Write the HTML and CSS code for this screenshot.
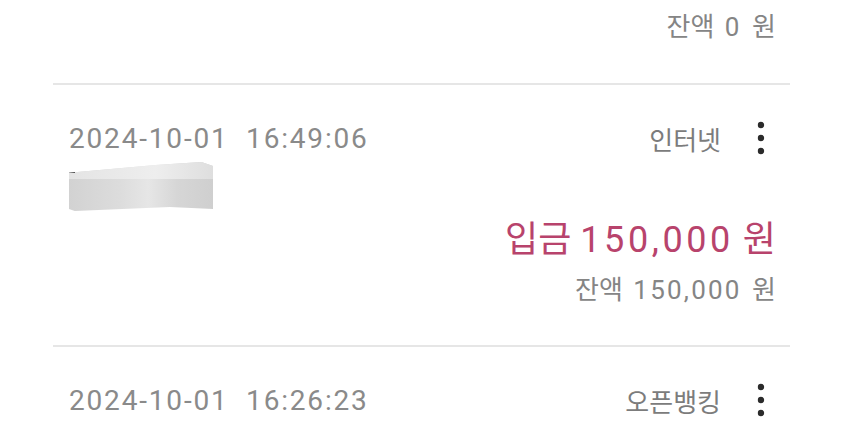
FILE: index.html
```html
<!DOCTYPE html>
<html lang="ko">
<head>
  <meta charset="UTF-8">
  <meta name="viewport" content="width=device-width, initial-scale=1.0">
  <title>거래내역</title>
  <link rel="stylesheet" href="styles.css">
</head>
<body>
  <ul class="tx-list">
    <li class="tx tx-cut">
      <div class="balance">잔액 <span class="num">0</span> 원</div>
    </li>

    <li class="tx">
      <div class="tx-head">
        <span class="date num">2024-10-01&nbsp;&nbsp;16:49:06</span>
        <span class="channel">인터넷</span>
        <button class="more" aria-label="더보기">
          <svg viewBox="0 0 10 36"><circle cx="5" cy="5" r="3.2"/><circle cx="5" cy="18" r="3.2"/><circle cx="5" cy="31" r="3.2"/></svg>
        </button>
      </div>
      <div class="memo"><span class="memo-mark"></span></div>
      <div class="amount deposit">입금 <span class="num">150,000</span> 원</div>
      <div class="balance">잔액 <span class="num">150,000</span> 원</div>
    </li>

    <li class="tx">
      <div class="tx-head">
        <span class="date num">2024-10-01&nbsp;&nbsp;16:26:23</span>
        <span class="channel">오픈뱅킹</span>
        <button class="more" aria-label="더보기">
          <svg viewBox="0 0 10 36"><circle cx="5" cy="5" r="3.2"/><circle cx="5" cy="18" r="3.2"/><circle cx="5" cy="31" r="3.2"/></svg>
        </button>
      </div>
    </li>
  </ul>
</body>
</html>
```

FILE: styles.css
```css
body {
  margin: 0;
  background: #fff;
  font-family: Roboto, "Noto Sans CJK KR", sans-serif;
  color: #888;
  overflow: hidden;
}
.tx-list {
  list-style: none;
  margin: 0 60px 0 53px;
  padding: 0;
}
.tx {
  border-bottom: 2px solid #e6e6e6;
  padding: 36px 14px 37px 16px;
}
.tx-cut {
  padding-top: 9px;
  padding-bottom: 38px;
}
.num {
  letter-spacing: 0.085em;
}
.tx-head {
  display: flex;
  align-items: center;
  height: 34px;
}
.date {
  font-size: 28px;
  color: #8a8a8a;
  letter-spacing: 0.065em;
  flex: 1;
}
.channel {
  font-size: 26px;
  color: #7c7c7c;
}
.more {
  background: none;
  border: none;
  padding: 0;
  margin: 0 10px 0 35px;
  width: 10px;
  height: 36px;
  display: flex;
}
.more svg {
  width: 10px;
  height: 36px;
  fill: #2b2b2b;
}
.memo {
  position: relative;
  margin-top: 7px;
  width: 144px;
  height: 49px;
  background: linear-gradient(90deg, #d2d2d2 0%, #dcdcdc 35%, #e6e6e6 55%, #d6d6d6 75%, #cfcfcf 100%);
  clip-path: polygon(0 22%, 60% 6%, 92% 0, 100% 8%, 100% 96%, 70% 92%, 4% 100%, 0 96%);
}
.memo::before {
  content: "";
  position: absolute;
  left: 0;
  top: 0;
  right: 0;
  height: 35%;
  background: linear-gradient(90deg, #e4e4e4, #eeeeee 60%, #dedede);
}
.memo-mark {
  position: absolute;
  left: 0;
  top: 8px;
  width: 6px;
  height: 3px;
  background: #222;
}
.amount {
  margin-top: 7px;
  text-align: right;
  font-size: 36px;
  line-height: 44px;
}
.amount .num {
  letter-spacing: 0.1em;
}
.deposit {
  color: #b8436c;
}
.balance {
  margin-top: 10px;
  text-align: right;
  font-size: 26px;
  line-height: 36px;
  word-spacing: 4px;
  color: #858585;
}
.tx-cut .balance {
  margin-top: 0;
}
```
